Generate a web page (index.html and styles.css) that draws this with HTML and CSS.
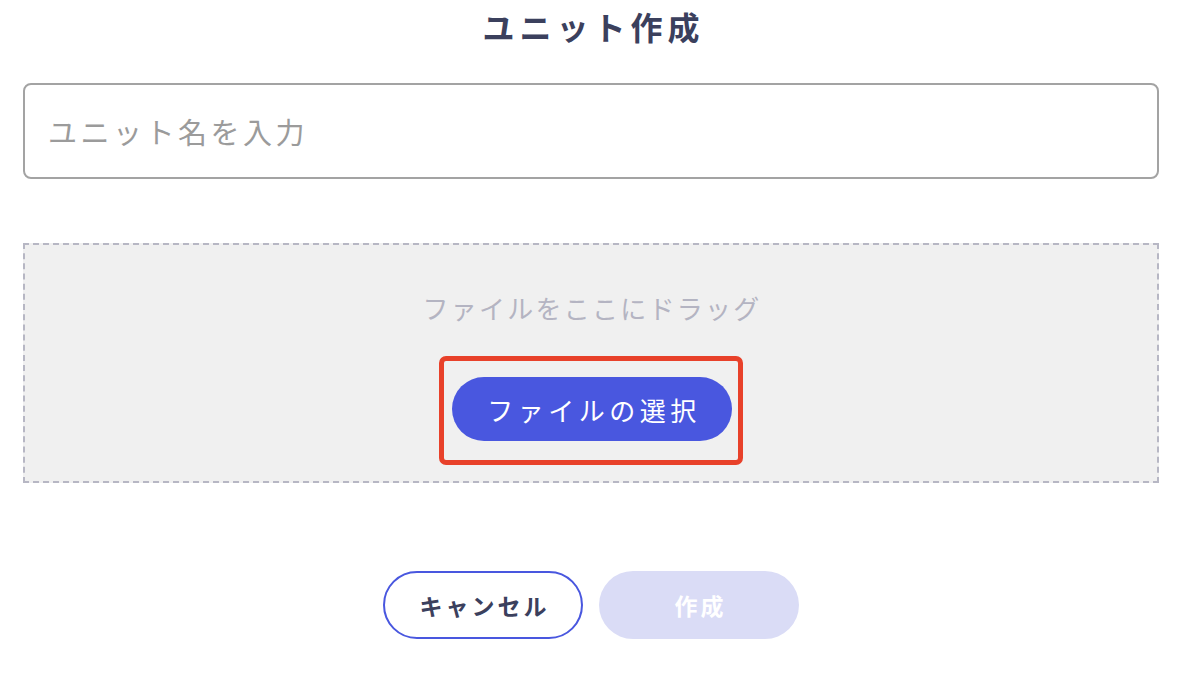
FILE: index.html
```html
<!DOCTYPE html>
<html lang="ja">
<head>
<meta charset="utf-8">
<title>ユニット作成</title>
<link rel="stylesheet" href="styles.css">
</head>
<body>
<main class="page">
  <h1 class="title">ユニット作成</h1>
  <input class="name-input" type="text" placeholder="ユニット名を入力">
  <section class="dropzone">
    <p class="drop-text">ファイルをここにドラッグ</p>
    <div class="highlight">
      <button class="select-btn" type="button">ファイルの選択</button>
    </div>
  </section>
  <div class="actions">
    <button class="btn btn-cancel" type="button">キャンセル</button>
    <button class="btn btn-create" type="button">作成</button>
  </div>
</main>
</body>
</html>
```

FILE: styles.css
```css
* { box-sizing: border-box; }
html, body {
  margin: 0;
  background: #ffffff;
  font-family: "Noto Sans CJK JP", "Noto Sans", sans-serif;
}
.page {
  display: flex;
  flex-direction: column;
  padding: 0 19px 0 23px;
}
.title {
  margin: 0;
  height: 83px;
  padding: 4px 0 0 5px;
  text-align: center;
  font-size: 32px;
  line-height: 44px;
  font-weight: 700;
  letter-spacing: 5px;
  color: #3b405d;
}
.name-input {
  display: block;
  width: 100%;
  height: 96px;
  border: 2px solid #a3a3a3;
  border-radius: 8px;
  padding: 0 23px;
  font-family: inherit;
  font-size: 29px;
  letter-spacing: 3.5px;
  color: #333;
  outline: none;
}
.name-input::placeholder { color: #9b9b9b; }
.dropzone {
  margin-top: 64px;
  height: 240px;
  border: 2px dashed #b7b7c4;
  background: #f0f0f0;
  display: flex;
  flex-direction: column;
  align-items: center;
  padding-top: 48px;
}
.drop-text {
  margin: 0;
  padding-left: 2px;
  font-size: 26px;
  line-height: 30px;
  letter-spacing: 2.25px;
  color: #b4b4c2;
}
.highlight {
  margin-top: 33px;
  border: 5px solid #e8412a;
  border-radius: 7px;
  padding: 16px 6px 19px 8px;
}
.select-btn {
  display: block;
  width: 280px;
  height: 64px;
  border: none;
  border-radius: 32px;
  background: #4957df;
  color: #ffffff;
  font-family: inherit;
  font-size: 26px;
  letter-spacing: 4.5px;
  padding: 0 0 0 4px;
}
.actions {
  margin-top: 88px;
  display: flex;
  justify-content: center;
  gap: 16px;
}
.btn {
  width: 200px;
  height: 68px;
  border-radius: 34px;
  font-family: inherit;
  font-size: 23px;
  font-weight: 700;
  letter-spacing: 3px;
  padding: 0 0 0 3px;
}
.btn-cancel {
  background: #ffffff;
  border: 2px solid #4957df;
  color: #3b405d;
}
.btn-create {
  background: #dadcf6;
  border: none;
  color: #ffffff;
}
```
